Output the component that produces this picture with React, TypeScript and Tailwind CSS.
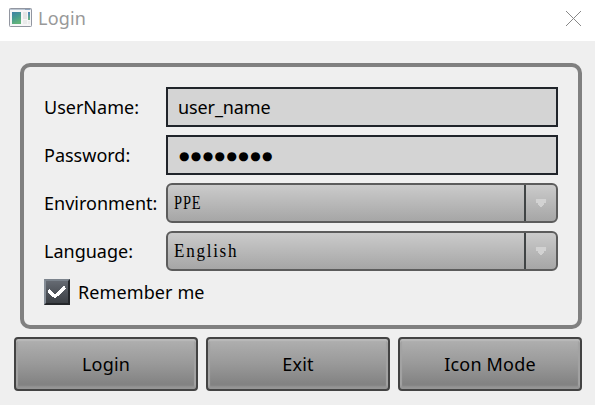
import type { ReactNode } from "react";

function WindowIcon() {
  return (
    <svg className="block" width="23" height="19" viewBox="0 0 23 19">
      <defs>
        <linearGradient id="pane" x1="0" y1="0" x2="0.4" y2="1">
          <stop offset="0" stopColor="#3f7fa6" />
          <stop offset="0.5" stopColor="#469a90" />
          <stop offset="1" stopColor="#62b37a" />
        </linearGradient>
        <linearGradient id="side" x1="0" y1="0" x2="0" y2="1">
          <stop offset="0" stopColor="#4a83bb" />
          <stop offset="1" stopColor="#6cb87e" />
        </linearGradient>
      </defs>
      <rect x="0.5" y="0.5" width="22" height="18" rx="0.8" fill="#f6f6f7" stroke="#9296a0" />
      <rect x="1" y="1" width="21" height="1" fill="#bcc6d2" />
      <rect x="16" y="1" width="5" height="1" fill="#8ea3bd" />
      <rect x="3" y="4" width="9" height="12" fill="url(#pane)" />
      <rect x="14" y="4" width="4" height="7" fill="#e4e5e5" />
      <rect x="19" y="4" width="2" height="8" fill="url(#side)" />
      <rect x="14" y="12" width="4" height="4" fill="#e9eaea" />
      <rect x="19" y="13" width="2" height="3" fill="#ececec" />
    </svg>
  );
}

function Row({ label, children }: { label: string; children: ReactNode }) {
  return (
    <div className="flex h-10 items-center">
      <div className="w-[122px] shrink-0 whitespace-nowrap">{label}</div>
      {children}
    </div>
  );
}

function Combo({ value, fit }: { value: string; fit: string }) {
  return (
    <div className="flex h-10 w-[392px] overflow-hidden rounded-[6px] border-2 border-[#5c5c5c] bg-linear-to-b from-[#cbcbcb] to-[#a6a6a6]">
      <div className="flex flex-1 items-center pl-1.5 font-['Liberation_Serif',serif] text-[18px]">
        <span className={`origin-left ${fit}`}>{value}</span>
      </div>
      <div className="flex w-8 items-center justify-center border-l-2 border-[#404445]">
        <svg className="block" width="12" height="9" viewBox="0 0 12 9">
          <path d="M0 0H12V2H11V4H9V6H8V7H7V8H5V7H4V6H3V4H1V2H0Z" fill="#d2d2d2" />
          <path d="M0 0H1V2H0ZM11 0H12V2H11Z" fill="#bdbdbd" />
        </svg>
      </div>
    </div>
  );
}

function Button({ label }: { label: string }) {
  return (
    <button className="flex h-[54px] w-[184px] shrink-0 items-center justify-center rounded-[4px] border-2 border-[#434343] bg-linear-to-b from-[#b0b0b0] via-[#999999] to-[#7d7d7d] pb-px tracking-[0.2px] shadow-[inset_0_2px_1px_#bababa,inset_0_-3px_2px_#969696,inset_2px_0_1px_#a5a5a5,inset_-2px_0_1px_#a5a5a5]">
      {label}
    </button>
  );
}

export default function App() {
  return (
    <div className="h-[405px] w-[595px] overflow-hidden bg-[#efefef] font-['Noto_Sans',sans-serif] text-[18px] leading-6 text-black">
      <header className="flex h-[41px] items-start bg-white pl-[9px] pr-[14px] pt-2">
        <WindowIcon />
        <span className="-mt-[2px] ml-[6px] tracking-[0.2px] text-[#999999]">Login</span>
        <svg className="ml-auto mt-[3px] block" width="15" height="15" viewBox="0 0 15 15">
          <path d="M0 0L15 15M15 0L0 15" stroke="#888888" strokeWidth="1" />
        </svg>
      </header>
      <main className="px-[14px] pt-[22px]">
        <section className="ml-[6px] flex h-[266px] w-[562px] flex-col gap-2 rounded-[10px] border-4 border-[#808080] px-5 pt-5">
          <Row label="UserName:">
            <div className="flex h-10 w-[392px] items-center border-2 border-[#20242a] bg-[#d4d4d4] pl-[10px] tracking-[-0.1px]">user_name</div>
          </Row>
          <Row label="Password:">
            <div className="flex h-10 w-[392px] items-center border-2 border-[#20242a] bg-[#d4d4d4] pl-[11px] pt-0.5 font-['DejaVu_Sans',sans-serif] text-[12px] tracking-[1.4px]">
              ●●●●●●●●
            </div>
          </Row>
          <Row label="Environment:">
            <Combo value="PPE" fit="scale-x-[0.8] tracking-[1.1px]" />
          </Row>
          <Row label="Language:">
            <Combo value="English" fit="scale-x-[0.95] tracking-[1.8px]" />
          </Row>
          <div className="flex items-center gap-2">
            <div className="flex size-[26px] items-center justify-center border-2 border-b-[#24272a] border-l-[#858d96] border-r-[#24272a] border-t-[#7b838c] bg-linear-to-b from-[#656a72] to-[#3c4045]">
              <svg className="block" width="20" height="16" viewBox="0 0 20 16" shapeRendering="crispEdges">
                <path d="M1.5 6.5L8 12.5L18 3" fill="none" stroke="white" strokeWidth="3.4" />
              </svg>
            </div>
            <span className="tracking-[0.1px]">Remember me</span>
          </div>
        </section>
        <div className="mt-2 flex gap-2">
          <Button label="Login" />
          <Button label="Exit" />
          <Button label="Icon Mode" />
        </div>
      </main>
    </div>
  );
}
